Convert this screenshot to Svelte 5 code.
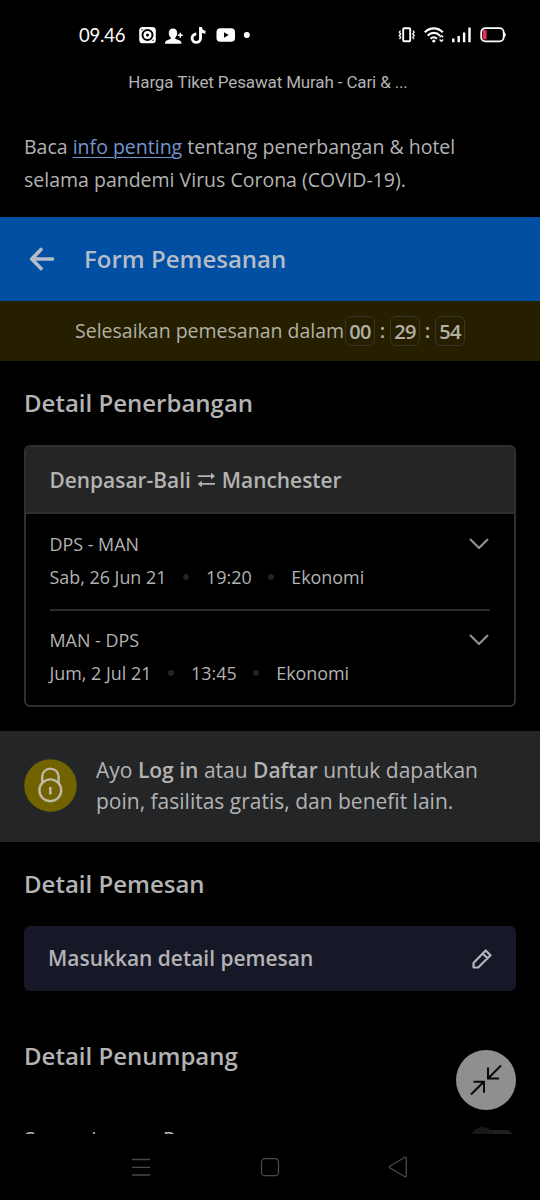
<script>
  const flights = [
    { route: 'DPS - MAN', date: 'Sab, 26 Jun 21', time: '19:20', cabin: 'Ekonomi' },
    { route: 'MAN - DPS', date: 'Jum, 2 Jul 21', time: '13:45', cabin: 'Ekonomi' }
  ];
  const timer = ['00', '29', '54'];
</script>

<div class="screen">
  <header class="status">
    <span class="clock">09.46</span>
    <svg class="left-icons" width="114" height="20" viewBox="0 0 114 20">
      <rect x="1.2" y="2" width="16.6" height="16.2" rx="3.5" fill="#fff" />
      <circle cx="9.5" cy="10" r="5" fill="none" stroke="#000" stroke-width="2" />
      <circle cx="9.5" cy="10" r="1.5" fill="#000" />
      <circle cx="4" cy="4.8" r=".7" fill="#000" /><circle cx="15" cy="15.3" r=".7" fill="#000" />
      <path d="M35 3.500c2.700 0 4.200 1.900 4.200 4.600 0 2-.8 3.700-2 4.600v1l5 2.100c.8.4 1.200 1.200 1.200 3H27c0-1.800.4-2.600 1.200-3l4.600-2.100v-1c-1.200-.9-2-2.600-2-4.600 0-2.700 1.500-4.600 4.200-4.600z" fill="#fff" />
      <path d="M39.800 10.300h5M42.300 7.800v5" stroke="#fff" stroke-width="1.500" />
      <path d="M62.500 2v11.200a4.200 4.200 0 1 1-4.200-4.200M62.500 2.500c.4 2.800 2.200 4.600 5 4.900" fill="none" stroke="#fff" stroke-width="2.900" />
      <rect x="78.500" y="3.300" width="18.500" height="13.400" rx="3.800" fill="#fff" />
      <path d="M86 7.300v5.400l4.700-2.700z" fill="#000" />
      <circle cx="108.800" cy="10" r="3" fill="#fff" />
    </svg>
    <svg class="right-icons" width="110" height="20" viewBox="0 0 110 20">
      <g fill="none" stroke="#fff">
        <rect x="5.200" y="3.300" width="7" height="13" rx="1" stroke-width="1.900" />
        <path d="M2.500 5.500l-1.200 1.700 1.400 1.700-1.400 1.700 1.400 1.700-1.200 1.800M15 5.500l1.200 1.700-1.400 1.700 1.400 1.700-1.400 1.700 1.200 1.800" stroke-width="1.300" />
        <path d="M26.800 7.300c5-5.200 13-5.200 18 0M29.700 10.600c3.500-3.700 8.700-3.700 12.200 0M32.600 13.700c1.900-1.900 4.500-1.900 6.300 0" stroke-width="2.100" />
        <path d="M41.600 12.300l1.800-1.700 1.800 1.700M41.600 14.500l1.800 1.700 1.800-1.700" stroke-width="1.400" />
        <rect x="83.200" y="3.200" width="22.500" height="13.200" rx="4.200" stroke-width="1.800" />
      </g>
      <circle cx="35.800" cy="16" r="1.600" fill="#fff" />
      <path d="M55.300 13.500v3.800M60.700 11v6.300M66.100 7.500v9.800M71.500 2.500v14.800" stroke="#fff" stroke-width="2.400" />
      <path d="M106.500 7.700q1.800 2.100 0 4.200z" fill="#fff" stroke="#fff" />
      <rect x="84.800" y="5" width="3.800" height="9.600" rx="1.300" fill="#e83050" />
    </svg>
  </header>

  <div class="page-title"><span>Harga Tiket Pesawat Murah - Cari &amp; ...</span></div>

  <p class="notice"><span>Baca <a href="#info">info penting</a> tentang penerbangan &amp; hotel</span><br /><span>selama pandemi Virus Corona (COVID-19).</span></p>

  <div class="appbar">
    <svg width="26" height="24" viewBox="0 0 26 24" fill="none" stroke="#b4bcc8" stroke-width="3.600" stroke-linecap="round" stroke-linejoin="round"><path d="M12 2.500L2.700 12l9.300 9.500M3.500 12h20" /></svg>
    <h1>Form Pemesanan</h1>
  </div>

  <div class="countdown">
    <span class="label">Selesaikan pemesanan dalam</span>
    {#each timer as part, i}
      {#if i}<span class="colon">:</span>{/if}
      <b>{part}</b>
    {/each}
  </div>

  <main>
    <h2>Detail Penerbangan</h2>
    <section class="card">
      <div class="card-head">
        <span>Denpasar-Bali</span>
        <svg width="19" height="16" viewBox="0 0 19 16" fill="#b3b3b3"><path d="M.8 3.200H14V.7l4 3.400-4 3.400V5H.8zM18 11H4.800V8.500l-4 3.400 4 3.400v-2.500H18z" /></svg>
        <span>Manchester</span>
      </div>
      {#each flights as flight}
        <div class="flight">
          <div class="route">
            <span>{flight.route}</span>
            <svg width="20" height="12" viewBox="0 0 20 12" fill="none" stroke="#92949a" stroke-width="2" stroke-linecap="round" stroke-linejoin="round"><path d="M1.500 1.500L10 10l8.500-8.500" /></svg>
          </div>
          <div class="meta"><span>{flight.date}</span><i></i><span>{flight.time}</span><i></i><span>{flight.cabin}</span></div>
        </div>
      {/each}
    </section>
  </main>

  <div class="login">
    <svg width="53" height="53" viewBox="0 0 53 53">
      <circle cx="26.500" cy="26.500" r="26.300" fill="#706300" />
      <g fill="none" stroke="#c0b9a6" stroke-width="2.400"><circle cx="26.300" cy="31.300" r="10.900" /><path d="M18.200 24v-6.200a8.200 8.200 0 0 1 16.400 0V24" /></g>
      <path d="M26.300 28v7.500" stroke="#c0b9a6" stroke-width="2.500" />
    </svg>
    <p>Ayo <b>Log in</b> atau <b>Daftar</b> untuk dapatkan<br />poin, fasilitas gratis, dan benefit lain.</p>
  </div>

  <section class="booker">
    <h2>Detail Pemesan</h2>
    <div class="fill">
      <span>Masukkan detail pemesan</span>
      <svg width="20" height="20" viewBox="0 0 20 20" fill="none" stroke="#b3b3b8" stroke-width="2.200" stroke-linejoin="round"><path d="M1.500 18.500V14L13.700 1.500l4.800 4.700L6.200 18.500zM10.800 4.500l4.700 4.700" /></svg>
    </div>
  </section>

  <section class="passenger">
    <h2>Detail Penumpang</h2>
    <div class="same"><span>Sama dengan Pemesan</span><svg width="45" height="30" viewBox="0 0 45 30"><rect x="4" y="4" width="40" height="20" rx="10" fill="#202020" /><circle cx="11.500" cy="13" r="12" fill="#181818" /></svg></div>
  </section>

  <svg class="shrink" width="60" height="60" viewBox="0 0 60 60">
    <circle cx="30" cy="30" r="30" fill="#8f8f8f" />
    <path d="M45 15.500L32.500 28M32 17.500v11h11M15 44.500L27.800 31.700M17.500 31.800H28v11" fill="none" stroke="#080808" stroke-width="2" />
  </svg>

  <nav>
    <svg width="540" height="66" viewBox="0 0 540 66" fill="none" stroke="#494949" stroke-width="1.300">
      <path d="M132 25.500h18M132 33.300h18M132 41h18" />
      <rect x="261.500" y="24.700" width="17" height="17" rx="3.500" />
      <path d="M390 32l14.500-8.500q1.800-.8 1.800 1v17q0 1.800-1.800 1L390 34q-1.600-1 0-2z" />
    </svg>
  </nav>
</div>

<style>
  :global(body) { margin: 0; background: #000; }
  .screen { position: relative; width: 540px; height: 1200px; overflow: hidden; display: flex; flex-direction: column; background: #000; color: #b3b3b3; font-family: "Open Sans", sans-serif; font-size: 20px; white-space: nowrap; }
  .screen > * { flex-shrink: 0; box-sizing: border-box; }
  h1, h2, p { margin: 0; font-weight: 600; }
  svg { display: block; flex-shrink: 0; }
  .status { height: 68px; padding: 1px 32px 0 79px; display: flex; align-items: center; color: #fff; }
  .clock { font: 18.500px/24px Lato, sans-serif; width: 59px; letter-spacing: -.2px; }
  .right-icons { margin-left: auto; }
  .page-title { height: 62px; text-align: center; font: 17px/28px Roboto, sans-serif; letter-spacing: -.14px; padding-right: 4px; }
  .notice { height: 87px; padding-left: 24px; line-height: 33px; font-weight: 400; font-size: 19.500px; }
  a { color: #7495d0; text-decoration: underline; text-decoration-thickness: 1px; text-underline-offset: 3px; }
  .appbar { height: 84px; padding: 0 0 1px 29px; display: flex; align-items: center; gap: 29px; background: #004fa2; color: #b4bcc8; }
  h1 { font-size: 24px; line-height: 33px; }
  .countdown { height: 60px; padding-left: 75px; display: flex; align-items: center; background: #251f00; color: #b2b0a5; }
  .label { width: 270px; font-size: 19.500px; padding-bottom: 2px; }
  .countdown b { width: 30px; height: 30px; box-sizing: border-box; border: 1px solid #38342b; border-radius: 6px; font-weight: 600; line-height: 30px; text-align: center; font-size: 20px; letter-spacing: -.6px; }
  .colon { width: 15px; text-align: center; font-weight: 600; line-height: 28px; }
  main { height: 370px; padding: 0 24px; }
  h2 { font-size: 24px; line-height: 84px; height: 84px; }
  main h2 { line-height: 83px; }
  .card { height: 262px; box-sizing: border-box; border: 2px solid #303030; border-radius: 6px; overflow: hidden; }
  .card-head { height: 65px; background: #252525; border-bottom: 2px solid #303030; display: flex; align-items: center; gap: 6px; padding-left: 23.500px; font-weight: 600; font-size: 20.900px; }
  .flight { margin: 0 24px; height: 95px; box-sizing: border-box; padding-top: 13px; }
  .flight + .flight { border-top: 2px solid #2b2b2b; padding-top: 12px; height: 97px; }
  .route, .meta { display: flex; align-items: center; height: 33px; font-size: 17.900px; margin-left: -.5px; }
  .route { justify-content: space-between; padding-right: 1px; }
  .meta i { width: 6px; height: 6px; border-radius: 50%; background: #242424; margin: 0 16.800px; }
  .login { height: 111px; padding: 24px 24px 0; display: flex; gap: 19px; background: #242526; align-items: flex-start; }
  .login svg { margin-top: 4px; }
  .login p { font-weight: 400; line-height: 31px; font-size: 21px; }
  .login b { font-weight: 600; }
  .booker { height: 150px; padding: 0 24px; }
  .fill { height: 65px; border-radius: 6px; background: #161828; display: flex; align-items: center; justify-content: space-between; padding: 0 24px; font-weight: 600; font-size: 20.950px; }
  .fill span { padding-bottom: 2px; }
  .passenger { height: 142px; padding: 22px 24px 0; overflow: hidden; }
  .same { display: flex; justify-content: space-between; padding-top: 28px; line-height: 28px; font-size: 21px; }
  .same svg { margin: 0 0 0 auto; }
  .shrink { position: absolute; left: 456px; top: 1050px; }
  nav { height: 66px; background: #000; }
</style>
